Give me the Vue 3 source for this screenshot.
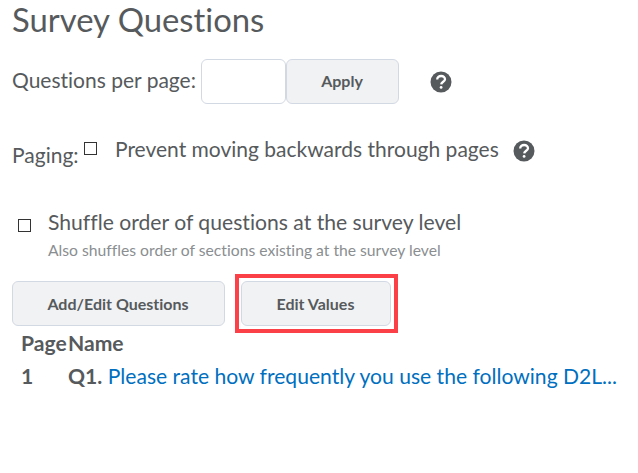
<script setup>
const pages = [{ page: '1', label: 'Q1.', text: 'Please rate how frequently you use the following D2L...' }]
</script>

<template>
  <main class="page">
    <h1 class="title">Survey Questions</h1>

    <div class="per-page">
      <label class="label">Questions per page:</label>
      <input class="input" type="text" />
      <button class="btn apply">Apply</button>
      <svg class="help help-a" viewBox="0 0 22 22" aria-hidden="true">
        <circle cx="11" cy="11" r="10.5" fill="#565a5c" />
        <path d="M7.2 8.6 C7.2 6.4 9 5 11.1 5 C13.3 5 15 6.4 15 8.3 C15 10.6 11.3 10.9 11.2 13.4" fill="none" stroke="#fff" stroke-width="2.3" />
        <circle cx="11.1" cy="16.4" r="1.4" fill="#fff" />
      </svg>
    </div>

    <div class="paging">
      <span class="paging-label">Paging:</span>
      <span class="check paging-check"></span>
      <span class="paging-text">Prevent moving backwards through pages</span>
      <svg class="help help-b" viewBox="0 0 22 22" aria-hidden="true">
        <circle cx="11" cy="11" r="10.5" fill="#565a5c" />
        <path d="M7.2 8.6 C7.2 6.4 9 5 11.1 5 C13.3 5 15 6.4 15 8.3 C15 10.6 11.3 10.9 11.2 13.4" fill="none" stroke="#fff" stroke-width="2.3" />
        <circle cx="11.1" cy="16.4" r="1.4" fill="#fff" />
      </svg>
    </div>

    <div class="shuffle">
      <span class="check"></span>
      <div class="shuffle-body">
        <div class="shuffle-text">Shuffle order of questions at the survey level</div>
        <div class="shuffle-sub">Also shuffles order of sections existing at the survey level</div>
      </div>
    </div>

    <div class="actions">
      <button class="btn add">Add/Edit Questions</button>
      <div class="highlight">
        <button class="btn edit">Edit Values</button>
      </div>
    </div>

    <div class="table">
      <div class="row head">
        <span class="col-page">Page</span>
        <span>Name</span>
      </div>
      <div v-for="p in pages" :key="p.page" class="row item">
        <span class="col-page">{{ p.page }}</span>
        <span class="name"><b>{{ p.label }}</b> <a class="link">{{ p.text }}</a></span>
      </div>
    </div>
  </main>
</template>

<style scoped>
.page {
  width: 638px;
  height: 473px;
  box-sizing: border-box;
  padding: 0 0 0 12px;
  overflow: hidden;
  background: #fff;
  color: #565a5c;
  font-family: Lato, sans-serif;
  font-variant-ligatures: none;
}
.title {
  margin: 0;
  height: 59px;
  font-size: 32.85px;
  line-height: 40px;
  font-weight: 400;
}
.per-page {
  display: flex;
  align-items: center;
  height: 45px;
}
.label {
  font-size: 21px;
  width: 189px;
  flex: none;
  margin-top: -4px;
}
.input {
  box-sizing: border-box;
  width: 85px;
  height: 45px;
  padding: 0;
  border: 1px solid #d3d9e3;
  border-radius: 6px;
  background: #fff;
}
.btn {
  box-sizing: border-box;
  height: 45px;
  padding: 0 1px 0 0;
  border: 1px solid #d3d9e3;
  border-radius: 6px;
  background: #f1f2f4;
  color: #565a5c;
  font-family: Lato, sans-serif;
  font-size: 16px;
  font-weight: 700;
  font-variant-ligatures: none;
}
.apply {
  width: 113px;
  padding-bottom: 2px;
}
.help {
  width: 22px;
  height: 22px;
  flex: none;
}
.help-a {
  margin-left: 31px;
}
.paging {
  display: flex;
  align-items: flex-start;
  height: 78px;
  margin-top: 33px;
}
.paging-label {
  font-size: 21px;
  line-height: 24px;
  margin-top: 6px;
  width: 72px;
}
.check {
  box-sizing: border-box;
  display: block;
  width: 13px;
  height: 13px;
  border: 1px solid #333;
  flex: none;
}
.paging-check {
  margin-top: 5px;
}
.paging-text {
  font-size: 21px;
  line-height: 24px;
  margin-left: 18px;
}
.help-b {
  margin: 3px 0 0 14px;
}
.shuffle {
  display: flex;
  align-items: flex-start;
  padding-left: 6px;
  height: 66px;
}
.shuffle .check {
  margin-top: 4px;
}
.shuffle-body {
  margin-left: 17px;
  margin-top: -5px;
}
.shuffle-text {
  font-size: 21.15px;
  line-height: 24px;
}
.shuffle-sub {
  margin-top: 7px;
  font-size: 15.7px;
  line-height: 18px;
  color: #8a8e91;
}
.actions {
  display: flex;
  align-items: center;
  height: 45px;
}
.add {
  width: 213px;
}
.highlight {
  margin-left: 10px;
  border: 4px solid #fb4048;
  padding: 3px 3px 3px 2px;
  display: flex;
}
.edit {
  width: 150px;
}
.table {
  padding-left: 9px;
  margin-top: 4px;
  font-size: 21.1px;
}
.row {
  display: flex;
}
.head {
  font-weight: 700;
  line-height: 26px;
}
.item {
  margin-top: 7px;
  line-height: 26px;
}
.col-page {
  width: 47px;
  flex: none;
  font-weight: 700;
}
.name {
  white-space: nowrap;
}
.name b {
  font-weight: 700;
}
.link {
  color: #006fbf;
}
</style>
